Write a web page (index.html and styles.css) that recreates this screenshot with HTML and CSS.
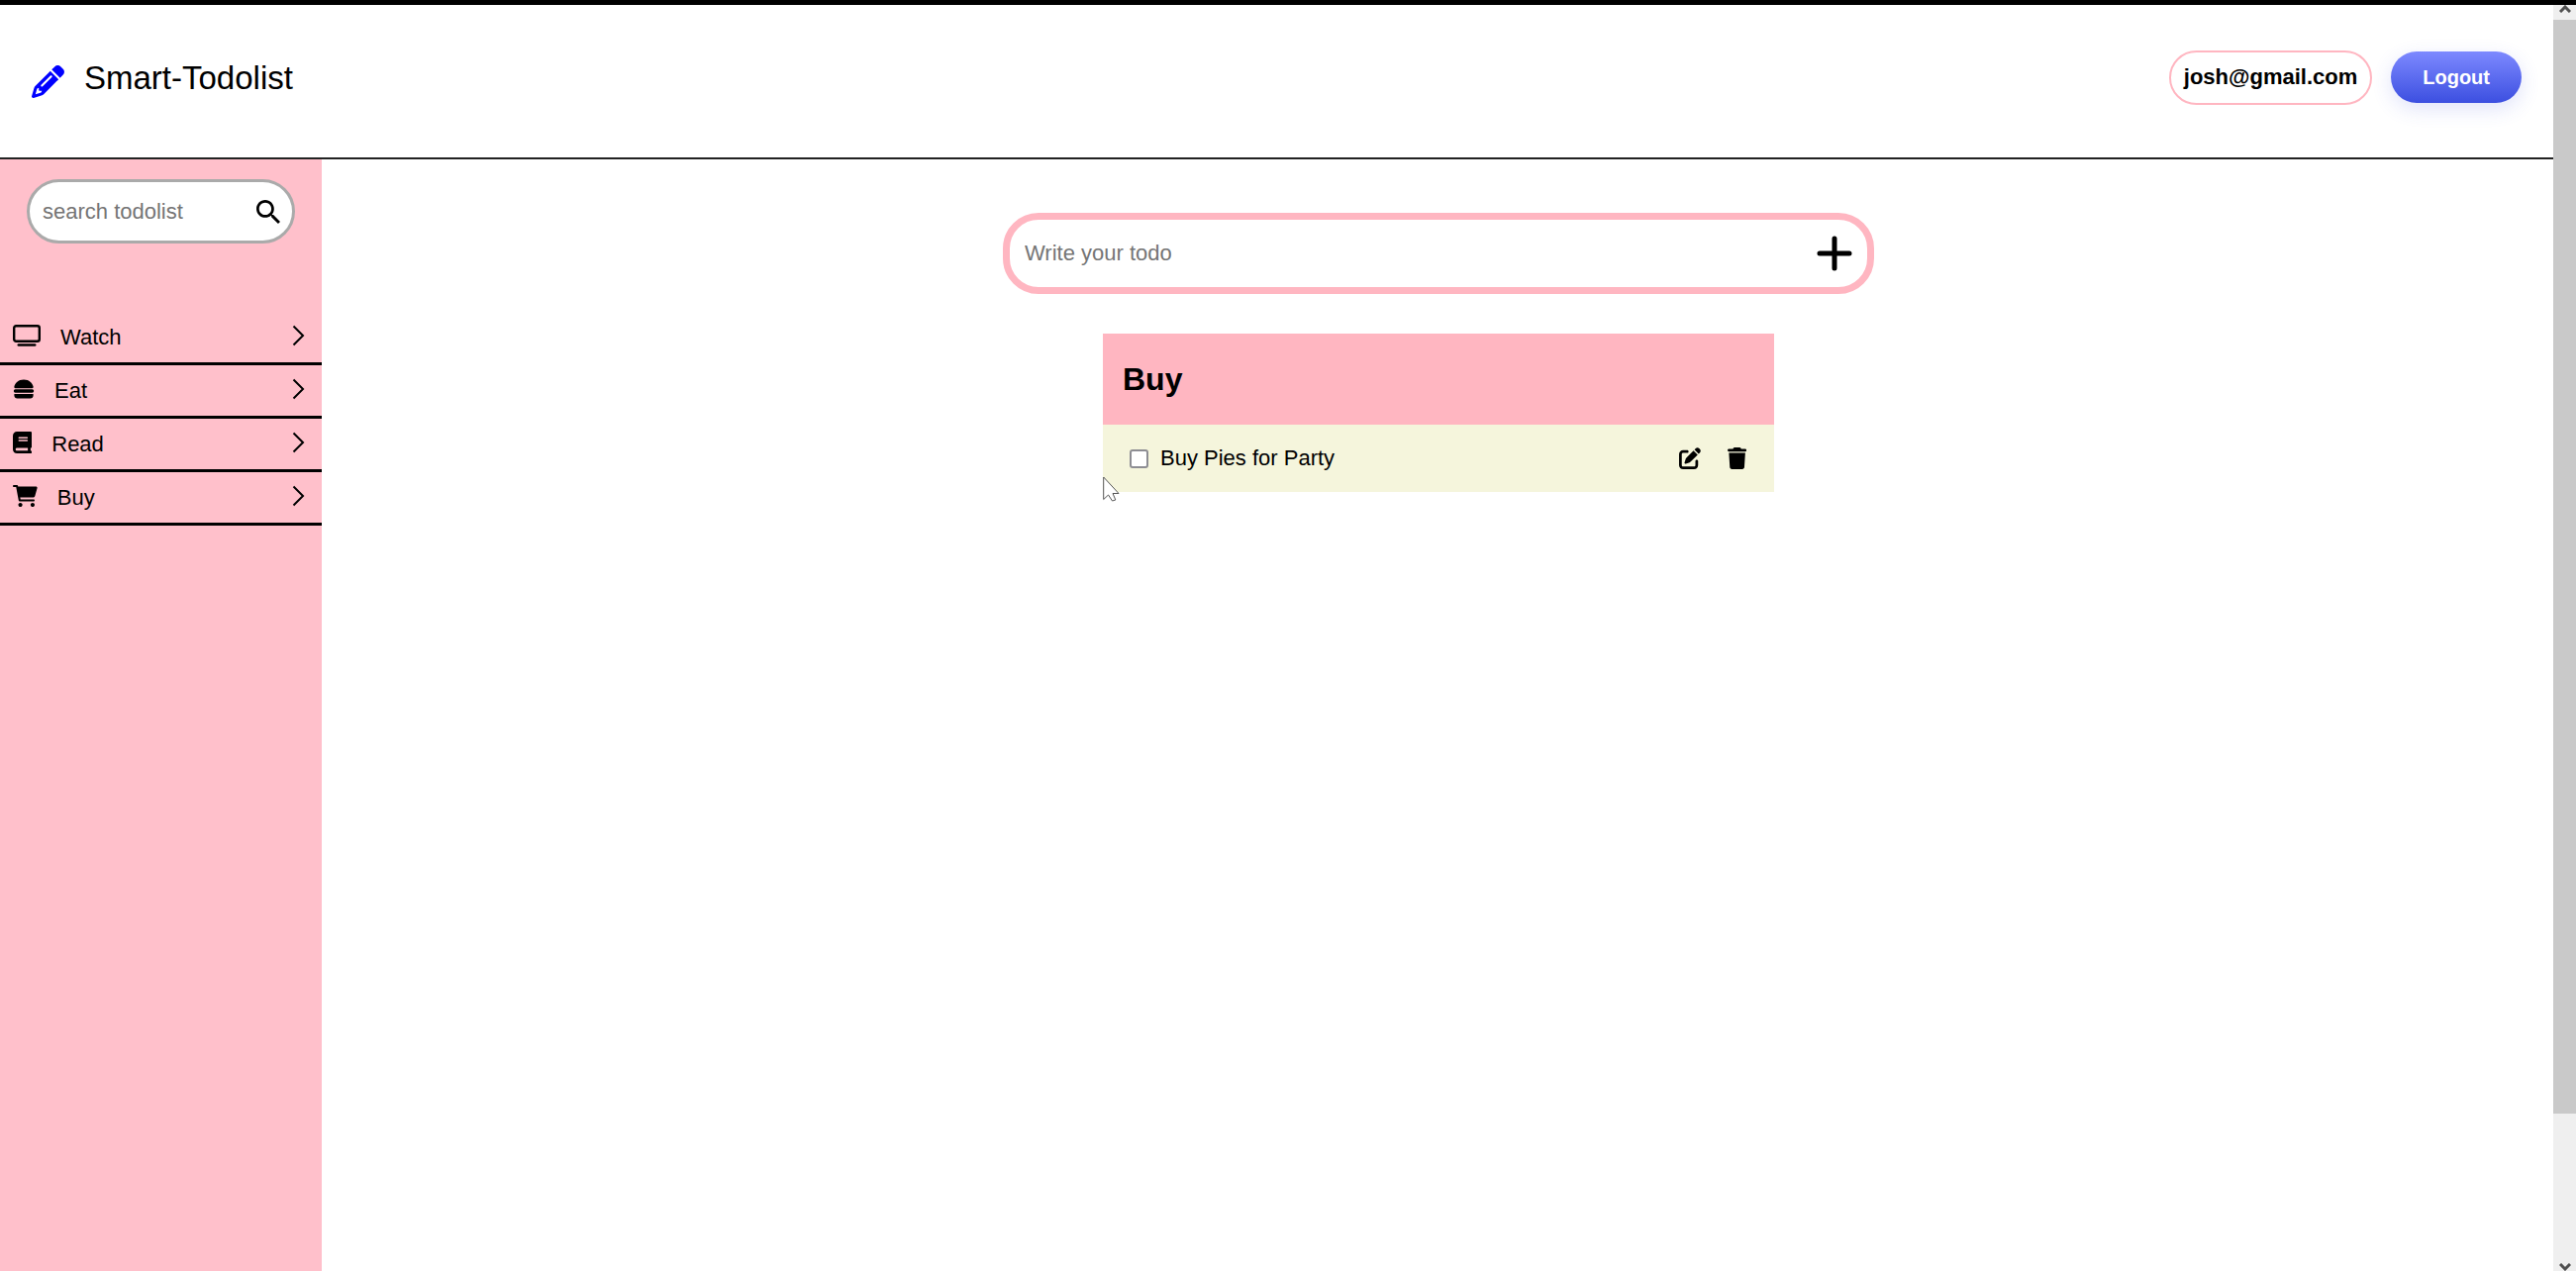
FILE: index.html
```html
<!DOCTYPE html>
<html lang="en">
<head>
<meta charset="utf-8">
<meta name="viewport" content="width=device-width, initial-scale=1">
<title>Smart-Todolist</title>
<link rel="stylesheet" href="styles.css">
</head>
<body>
<div class="window">
  <div class="app">
    <header class="header">
      <a class="brand" href="#">
        <svg class="brand-icon" viewBox="0 0 512 512" aria-hidden="true"><path d="M410.3 231l11.3-11.3-33.9-33.9-62.1-62.1L291.7 89.8l-11.3 11.3-22.6 22.6L58.6 322.9c-10.4 10.4-18 23.3-22.2 37.4L1 480.7c-2.5 8.4-.2 17.5 6.1 23.7s15.3 8.5 23.7 6.1l120.3-35.4c14.1-4.2 27-11.8 37.4-22.2L387.7 253.7 410.3 231zM160 399.4l-9.1 22.7c-4 3.1-8.5 5.4-13.3 6.9L59.4 452l23-78.1c1.4-4.9 3.8-9.4 6.9-13.3l22.7-9.1v32c0 8.8 7.2 16 16 16h32zM362.7 18.7L348.3 33.2 325.7 55.8 314.3 67.1l33.9 33.9 62.1 62.1 33.9 33.9 11.3-11.3 22.6-22.6 14.5-14.5c25-25 25-65.5 0-90.5L453.3 18.7c-25-25-65.5-25-90.5 0zm-47.4 168l-144 144c-6.2 6.2-16.4 6.2-22.6 0s-6.2-16.4 0-22.6l144-144c6.2-6.2 16.4-6.2 22.6 0s6.2 16.4 0 22.6z"/></svg>
        <span>Smart-Todolist</span>
      </a>
      <div class="account">
        <span class="user">josh@gmail.com</span>
        <button class="logout" type="button">Logout</button>
      </div>
    </header>
    <div class="body">
      <aside class="sidebar">
        <form class="search">
          <input class="field" type="text" placeholder="search todolist" aria-label="Search todolist">
          <button class="icon-button" type="button" aria-label="Search">
            <svg class="search-icon" viewBox="3 3 17.5 17.5" aria-hidden="true"><path d="M15.5 14h-.79l-.28-.27C15.41 12.59 16 11.11 16 9.5 16 5.91 13.09 3 9.5 3S3 5.91 3 9.5 5.91 16 9.5 16c1.61 0 3.09-.59 4.23-1.57l.27.28v.79l5 4.99L20.49 19l-4.99-5zm-6 0C7.01 14 5 11.99 5 9.5S7.01 5 9.5 5 14 7.01 14 9.5 11.99 14 9.5 14z"/></svg>
          </button>
        </form>
        <nav class="menu">
          <a class="menu-item" href="#">
            <svg class="menu-icon" viewBox="0 0 28 22" aria-hidden="true"><rect x="1.200" y="1.200" width="25.600" height="15.600" rx="2" fill="none" stroke="#000" stroke-width="2.400"/><rect x="4.500" y="19.200" width="19" height="2.600" rx="1.300"/></svg>
            <span class="menu-label">Watch</span>
            <svg class="chevron" viewBox="0 0 13 22" aria-hidden="true"><path d="M1.5 1.5 11 11 1.500 20.500"/></svg>
          </a>
          <a class="menu-item" href="#">
            <svg class="menu-icon" viewBox="0 0 22 22" aria-hidden="true"><path d="M2.500 10.200C1.600 10.200 1.200 9.300 1.400 8.500 2.200 5 5.500 1.500 11 1.500S19.800 5 20.600 8.500C20.800 9.300 20.400 10.200 19.500 10.200z"/><rect x=".8" y="11.300" width="20.400" height="3.400" rx="1.700"/><path d="M1.400 15.900H20.600V17.500C20.600 19.200 19.300 20.600 17.600 20.600H4.400C2.700 20.600 1.400 19.200 1.400 17.500z"/></svg>
            <span class="menu-label">Eat</span>
            <svg class="chevron" viewBox="0 0 13 22" aria-hidden="true"><path d="M1.5 1.5 11 11 1.500 20.500"/></svg>
          </a>
          <a class="menu-item" href="#">
            <svg class="menu-icon" viewBox="0 0 448 512" aria-hidden="true"><path fill-rule="evenodd" d="M96 0C43 0 0 43 0 96V416c0 53 43 96 96 96H416c17.700 0 32-14.300 32-32s-14.300-32-32-32V384c17.700 0 32-14.300 32-32V32c0-17.700-14.300-32-32-32H96zm0 384H352v64H96c-17.700 0-32-14.300-32-32s14.300-32 32-32zm32-240c0-8.800 7.200-16 16-16H336c8.800 0 16 7.200 16 16s-7.200 16-16 16H144c-8.800 0-16-7.200-16-16zm16 48H336c8.800 0 16 7.200 16 16s-7.200 16-16 16H144c-8.800 0-16-7.200-16-16s7.200-16 16-16z"/></svg>
            <span class="menu-label">Read</span>
            <svg class="chevron" viewBox="0 0 13 22" aria-hidden="true"><path d="M1.5 1.5 11 11 1.500 20.500"/></svg>
          </a>
          <a class="menu-item" href="#">
            <svg class="menu-icon" viewBox="0 0 576 512" aria-hidden="true"><path d="M96 0C107.500 0 117.400 8.190 119.600 19.510L121.100 32H541.800C562.100 32 578.300 52.250 572.600 72.660L518.600 264.700C514.700 278.500 502.100 288 487.800 288H170.700L179.900 336H488C501.300 336 512 346.700 512 360C512 373.300 501.300 384 488 384H159.100C148.500 384 138.600 375.800 136.400 364.500L76.140 48H24C10.750 48 0 37.250 0 24C0 10.750 10.750 0 24 0H96zM128 464C128 437.500 149.500 416 176 416C202.500 416 224 437.500 224 464C224 490.500 202.500 512 176 512C149.500 512 128 490.500 128 464zM512 464C512 490.500 490.500 512 464 512C437.500 512 416 490.500 416 464C416 437.500 437.500 416 464 416C490.500 416 512 437.500 512 464z"/></svg>
            <span class="menu-label">Buy</span>
            <svg class="chevron" viewBox="0 0 13 22" aria-hidden="true"><path d="M1.5 1.5 11 11 1.500 20.500"/></svg>
          </a>
        </nav>
      </aside>
      <main class="main">
        <form class="composer">
          <input class="field" type="text" placeholder="Write your todo" aria-label="Write your todo">
          <button class="icon-button" type="button" aria-label="Add todo">
            <svg class="plus-icon" viewBox="0 0 36 36" aria-hidden="true"><path d="M18 3V33M3 18H33"/></svg>
          </button>
        </form>
        <section class="list">
          <h2 class="list-title">Buy</h2>
          <div class="todo">
            <input class="todo-check" type="checkbox" id="todo-1">
            <label class="todo-label" for="todo-1">Buy Pies for Party</label>
            <button class="icon-button" type="button" aria-label="Edit">
              <svg class="action-icon" viewBox="0 0 512 512" aria-hidden="true"><path d="M471.600 21.700c-21.900-21.900-57.300-21.900-79.200 0L362.300 51.700l97.900 97.900 30.100-30.100c21.900-21.900 21.900-57.300 0-79.200L471.600 21.700zm-299.200 220c-6.100 6.100-10.800 13.600-13.500 21.900l-29.600 88.800c-2.900 8.600-.6 18.100 5.800 24.600s15.900 8.700 24.600 5.800l88.800-29.600c8.200-2.700 15.700-7.400 21.900-13.500L437.700 172.300 339.700 74.300 172.400 241.700zM96 64C43 64 0 107 0 160V416c0 53 43 96 96 96H352c53 0 96-43 96-96V320c0-17.700-14.300-32-32-32s-32 14.300-32 32v96c0 17.700-14.300 32-32 32H96c-17.700 0-32-14.300-32-32V160c0-17.700 14.300-32 32-32h96c17.700 0 32-14.300 32-32s-14.300-32-32-32H96z"/></svg>
            </button>
            <button class="icon-button" type="button" aria-label="Delete">
              <svg class="action-icon" viewBox="0 0 448 512" aria-hidden="true"><path d="M135.200 17.700L128 32H32C14.300 32 0 46.300 0 64S14.300 96 32 96H416c17.700 0 32-14.300 32-32s-14.300-32-32-32H320l-7.200-14.300C307.400 6.800 296.300 0 284.200 0H163.800c-12.100 0-23.200 6.800-28.600 17.700zM416 128H32L53.200 467c1.600 25.300 22.600 45 47.900 45H346.900c25.300 0 46.300-19.700 47.900-45L416 128z"/></svg>
            </button>
            <svg class="pointer" viewBox="0 0 17 26" aria-hidden="true"><path d="M.7 1V23.500L5.500 19 9.500 25 12.800 24 10 17.500H16z"/></svg>
          </div>
        </section>
      </main>
    </div>
  </div>
  <div class="scrollbar" aria-hidden="true">
    <svg class="scroll-arrow" viewBox="0 0 12 8"><path d="M1 7 6 2 11 7"/></svg>
    <div class="scroll-track"><div class="scroll-thumb"></div></div>
    <svg class="scroll-arrow" viewBox="0 0 12 8"><path d="M1 1 6 6 11 1"/></svg>
  </div>
</div>
</body>
</html>
```
FILE: styles.css
```css
* {
  box-sizing: border-box;
}

body {
  margin: 0;
  background: #fff;
  color: #000;
  font: 22px/26px "Liberation Sans", Arial, sans-serif;
}

button,
input {
  font: inherit;
}

a {
  color: inherit;
  text-decoration: none;
}

svg {
  display: block;
  flex: none;
}

.window {
  display: flex;
  min-height: 100vh;
  border-top: 5px solid #000;
}

.app {
  display: flex;
  flex: 1;
  flex-direction: column;
  min-width: 0;
}

.header {
  display: flex;
  align-items: center;
  justify-content: space-between;
  min-height: 156px;
  padding: 0 32px 8px;
  border-bottom: 2px solid #222;
}

.brand {
  display: flex;
  align-items: center;
  gap: 20px;
  padding-top: 2px;
  font-size: 33px;
  line-height: 38px;
}

.brand-icon {
  width: 33px;
  height: 33px;
  margin-top: 6px;
  fill: #00f;
}

.account {
  display: flex;
  align-items: center;
  gap: 19px;
}

.user {
  padding: 12px 13px 13px;
  border: 2px solid #ffb6c1;
  border-radius: 28px;
  font-weight: bold;
}

.logout {
  padding: 13px 32px;
  border: 0;
  border-radius: 26px;
  background: linear-gradient(#7d89ff, #3c4fe0);
  box-shadow: 0 6px 20px rgba(60, 79, 224, 0.16);
  color: #fff;
  font-size: 20px;
  font-weight: bold;
}

.body {
  display: flex;
  flex: 1;
}

.sidebar {
  flex: none;
  width: 325px;
  background: #ffc0cb;
}

.search {
  display: flex;
  align-items: center;
  height: 65px;
  margin: 20px 27px 69px;
  padding: 0 12px 0 13px;
  border: 3px solid #aaa;
  border-radius: 33px;
  background: #fff;
}

.field {
  flex: 1;
  min-width: 0;
  padding: 0;
  border: 0;
  outline: 0;
  background: none;
}

.field::placeholder {
  color: #757575;
}

.icon-button {
  flex: none;
  padding: 0;
  border: 0;
  background: none;
}

.search-icon {
  width: 24px;
  height: 24px;
}

.menu-item {
  display: flex;
  align-items: center;
  height: 54px;
  padding: 0 17px 0 13px;
  border-bottom: 3px solid #000;
}

.menu-icon {
  height: 22px;
  margin: 0 20px 4px 0;
}

.menu-label {
  flex: 1;
}

.chevron {
  width: 13px;
  height: 22px;
  margin-bottom: 4px;
  fill: none;
  stroke: #000;
  stroke-width: 2;
}

.main {
  display: flex;
  flex: 1;
  flex-direction: column;
  align-items: center;
  gap: 40px;
  padding: 54px 20px 54px 22px;
}

.composer {
  display: flex;
  align-items: center;
  width: 100%;
  max-width: 880px;
  height: 82px;
  padding: 0 15px;
  border: 7px solid #ffb6c1;
  border-radius: 36px;
}

.plus-icon {
  width: 36px;
  height: 36px;
  stroke: #000;
  stroke-width: 5;
  stroke-linecap: round;
}

.list {
  width: 100%;
  max-width: 678px;
}

.list-title {
  margin: 0;
  padding: 27px 20px;
  background: #ffb6c1;
  font-size: 32px;
  line-height: 38px;
}

.todo {
  position: relative;
  display: flex;
  align-items: center;
  gap: 27px;
  height: 68px;
  padding: 0 28px 0 27px;
  background: #f5f5dc;
}

.todo-check {
  width: 19px;
  height: 19px;
  margin: 0 -15px 0 0;
  appearance: none;
  border: 2px solid #8d8d93;
  border-radius: 3px;
  background: #fff;
}

.todo-label {
  flex: 1;
}

.action-icon {
  height: 22px;
}

.pointer {
  position: absolute;
  top: 52px;
  left: 0;
  width: 17px;
  height: 26px;
  fill: #fff;
  stroke: #555;
  stroke-width: 1;
}

.scrollbar {
  display: flex;
  flex: none;
  flex-direction: column;
  align-items: center;
  width: 23px;
  background: #efefef;
}

.scroll-arrow {
  width: 12px;
  height: 8px;
  fill: none;
  stroke: #505050;
  stroke-width: 3;
}

.scroll-track {
  flex: 1;
  width: 100%;
  padding-top: 7px;
}

.scroll-thumb {
  height: 88%;
  background: #c9c9c9;
}
```
